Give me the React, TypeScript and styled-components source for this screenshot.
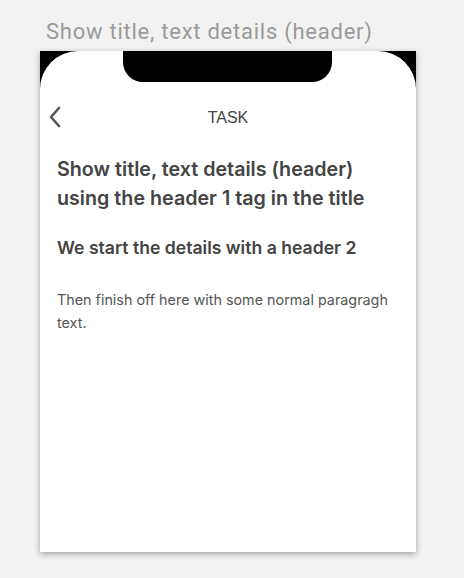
import styled, { createGlobalStyle } from 'styled-components';

const GlobalStyle = createGlobalStyle`
  html, body {
    margin: 0;
    padding: 0;
    background: #f2f2f2;
  }
`;

const Page = styled.div`
  width: 464px;
  height: 578px;
  padding: 17px 0 0 40px;
  box-sizing: border-box;
  font-family: Inter, 'Noto Sans', sans-serif;
`;

const Label = styled.div`
  margin-left: 6px;
  height: 34px;
  font-family: Roboto, 'Liberation Sans', sans-serif;
  font-size: 22px;
  line-height: 30px;
  letter-spacing: 0.75px;
  color: #9a9a9a;
`;

const Phone = styled.div`
  width: 376px;
  height: 501px;
  background: #000;
  box-shadow: 0 2px 6px rgba(0, 0, 0, 0.35);
  display: flex;
`;

const Screen = styled.div`
  position: relative;
  flex: 1;
  background: #fff;
  border-radius: 38px 38px 0 0;
  display: flex;
  flex-direction: column;
`;

const Notch = styled.div`
  position: absolute;
  top: 0;
  left: 83px;
  width: 209px;
  height: 31px;
  background: #000;
  border-radius: 0 0 20px 20px;
`;

const NavBar = styled.div`
  margin-top: 50px;
  height: 32px;
  display: grid;
  grid-template-columns: 40px 1fr 40px;
  align-items: center;
`;

const BackButton = styled.button`
  border: 0;
  background: none;
  padding: 0 0 0 8px;
  display: flex;
  align-items: center;
  cursor: pointer;
`;

const NavTitle = styled.div`
  text-align: center;
  font-family: 'Liberation Sans', Arial, sans-serif;
  font-size: 16px;
  padding-top: 2px;
  color: #444;
`;

const Content = styled.div`
  padding: 22px 17px 0 17px;
  color: #444;
`;

const H1 = styled.h1`
  margin: 0;
  font-size: 19.7px;
  line-height: 29px;
  font-weight: 600;
`;

const H2 = styled.h2`
  margin: 23px 0 0;
  font-size: 17.6px;
  line-height: 24px;
  font-weight: 600;
`;

const Para = styled.p`
  margin: 28px 0 0;
  font-size: 14.35px;
  line-height: 23px;
  color: #555;
`;

export default function App() {
  return (
    <>
      <GlobalStyle />
      <Page>
        <Label>Show title, text details (header)</Label>
        <Phone>
          <Screen>
            <Notch />
            <NavBar>
              <BackButton aria-label="Back">
                <svg width="13" height="22" viewBox="0 0 13 22" fill="none">
                  <path d="M11 2 L3 11 L11 20" stroke="#555" strokeWidth="2.6" strokeLinecap="round" strokeLinejoin="round" />
                </svg>
              </BackButton>
              <NavTitle>TASK</NavTitle>
              <div />
            </NavBar>
            <Content>
              <H1>
                Show title, text details (header)
                <br />
                using the header 1 tag in the title
              </H1>
              <H2>We start the details with a header 2</H2>
              <Para>Then finish off here with some normal paragragh text.</Para>
            </Content>
          </Screen>
        </Phone>
      </Page>
    </>
  );
}
